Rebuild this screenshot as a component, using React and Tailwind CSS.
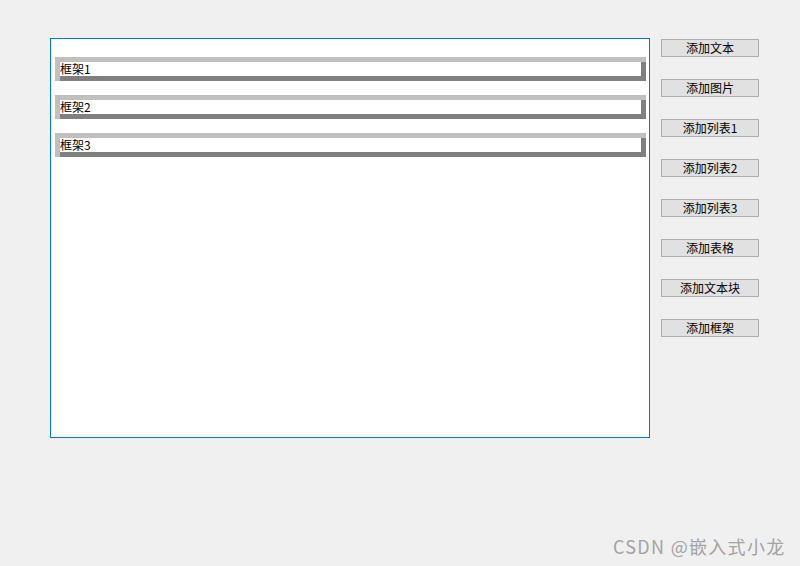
const FRAMES = ['框架1', '框架2', '框架3']
const BUTTONS = ['添加文本', '添加图片', '添加列表1', '添加列表2', '添加列表3', '添加表格', '添加文本块', '添加框架']

const FONT = { fontFamily: '"Noto Sans CJK SC", "Liberation Sans", sans-serif' }

function Frame({ label }) {
  // 上/左浅灰，下/右深灰的凸起边框
  return (
    <div className="bg-[#c0c0c0] pt-[5px] pl-[5px]">
      <div className="bg-[#808080] pb-[5px] pr-[5px]">
        <div className="bg-white h-[14px] flex items-center text-[12px] leading-none text-black">
          {label}
        </div>
      </div>
    </div>
  )
}

export default function App() {
  return (
    <div className="relative w-[800px] h-[566px] bg-[#f0f0f0] overflow-hidden" style={FONT}>
      <div className="flex pl-[50px] pt-[38px]">
        {/* 主编辑区 */}
        <div className="w-[600px] h-[400px] border border-[#0078d7] bg-white pt-[18px] pl-[4px] pr-[3px] flex flex-col gap-[14px]">
          {FRAMES.map((f) => (
            <Frame key={f} label={f} />
          ))}
        </div>

        {/* 右侧按钮 */}
        <div className="ml-[11px] pt-px flex flex-col gap-[22px]">
          {BUTTONS.map((b) => (
            <button
              key={b}
              className="w-[98px] h-[18px] border border-[#adadad] bg-[#e1e1e1] text-[12px] leading-none text-black flex items-center justify-center"
            >
              {b}
            </button>
          ))}
        </div>
      </div>

      {/* 水印 */}
      <div className="absolute left-[613px] top-[534px] text-[18px] leading-[24px] text-[#a3a3a3] tracking-[1.3px]">
        CSDN @嵌入式小龙
      </div>
    </div>
  )
}
